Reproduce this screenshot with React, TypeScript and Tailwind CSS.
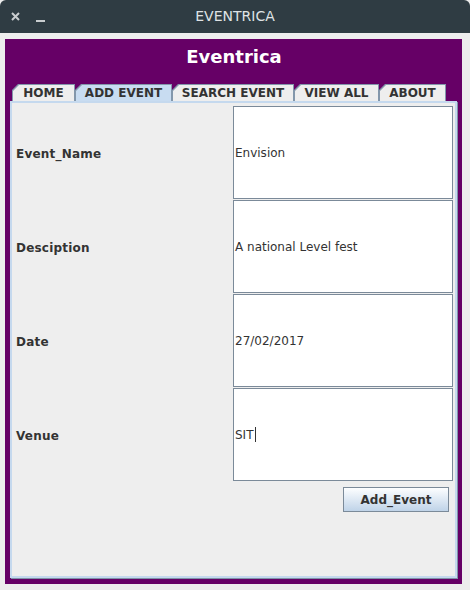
import React from "react";

const tabs = [
  { label: "HOME", cls: "w-[63px]", sel: false },
  { label: "ADD EVENT", cls: "w-[97px]", sel: true },
  { label: "SEARCH EVENT", cls: "w-[122px]", sel: false },
  { label: "VIEW ALL", cls: "w-[85px]", sel: false },
  { label: "ABOUT", cls: "w-[67px]", sel: false },
];

const rows = [
  { label: "Event_Name", value: "Envision" },
  { label: "Desciption", value: "A national Level fest" },
  { label: "Date", value: "27/02/2017" },
  { label: "Venue", value: "SIT", caret: true },
];

const clip = "[clip-path:polygon(6px_0,100%_0,100%_100%,0_100%,0_6px)]";

export default function App() {
  return (
    <div className="w-[470px] h-[590px] bg-[#ededed] flex flex-col font-['DejaVu_Sans',sans-serif] overflow-hidden">
      {/* Title bar */}
      <div className="h-[33px] bg-[#2f3c43] rounded-t-[6px] flex items-center relative">
        <div className="flex items-center pl-[11px] gap-[16px]">
          <svg width="9" height="9" viewBox="0 0 9 9">
            <path d="M1 1 L8 8 M8 1 L1 8" stroke="#c9cdcf" strokeWidth="2" />
          </svg>
          <svg width="9" height="9" viewBox="0 0 9 9" className="mt-[4px]">
            <path d="M0 7 H9" stroke="#c9cdcf" strokeWidth="2" />
          </svg>
        </div>
        <div className="absolute inset-0 flex items-center justify-center text-[14px] text-[#dfe3e5] pointer-events-none">
          EVENTRICA
        </div>
      </div>

      {/* Purple frame */}
      <div className="mt-[6px] ml-[5px] w-[457px] h-[545px] bg-[#660066] flex flex-col pl-[5px] pr-[4px]">
        <div className="h-[45px] pt-[7px] text-center text-white font-bold text-[18px] leading-[22px]">
          Eventrica
        </div>

        {/* Tabs */}
        <div className="flex h-[17px] ml-[2px]">
          {tabs.map((t) => (
            <div key={t.label} className={`${t.cls} h-[17px] bg-[#8397ab] pt-[1px] pl-[1px] pr-[1px] ${clip}`}>
              <div
                className={`h-full flex items-center justify-center text-[12px] font-bold text-[#333333] leading-none ${clip} ${
                  t.sel ? "bg-[#c8dcf1]" : "bg-[#eeeeee]"
                }`}
              >
                {t.label}
              </div>
            </div>
          ))}
        </div>

        {/* Panel */}
        <div className="w-[447px] h-[477px] bg-[#eeeeee] border-2 border-[#c5d9ee] shadow-[1px_1px_0_#7f93a8] pt-[3px] pl-[4px] flex flex-col">
          <div className="flex flex-col gap-[1px]">
            {rows.map((r) => (
              <div key={r.label} className="flex h-[93px]">
                <div className="w-[217px] flex items-center pt-[2px] text-[12px] font-bold text-[#333333] tracking-[0.2px]">{r.label}</div>
                <div className="w-[220px] h-[93px] bg-white border border-[#7b8a99] flex items-center pl-[1px] text-[12px] text-[#333333]">
                  <span>{r.value}</span>
                  {r.caret && <span className="inline-block w-[1px] h-[15px] bg-[#333333] ml-[1px]" />}
                </div>
              </div>
            ))}
          </div>
          <div className="flex justify-end pr-[6px] mt-[6px]">
            <button className="w-[106px] h-[25px] border border-[#7b8a99] bg-gradient-to-b from-[#fdfeff] to-[#bfd3e8] text-[12px] font-bold text-[#333333] font-['DejaVu_Sans',sans-serif]">
              Add_Event
            </button>
          </div>
        </div>
      </div>
    </div>
  );
}
